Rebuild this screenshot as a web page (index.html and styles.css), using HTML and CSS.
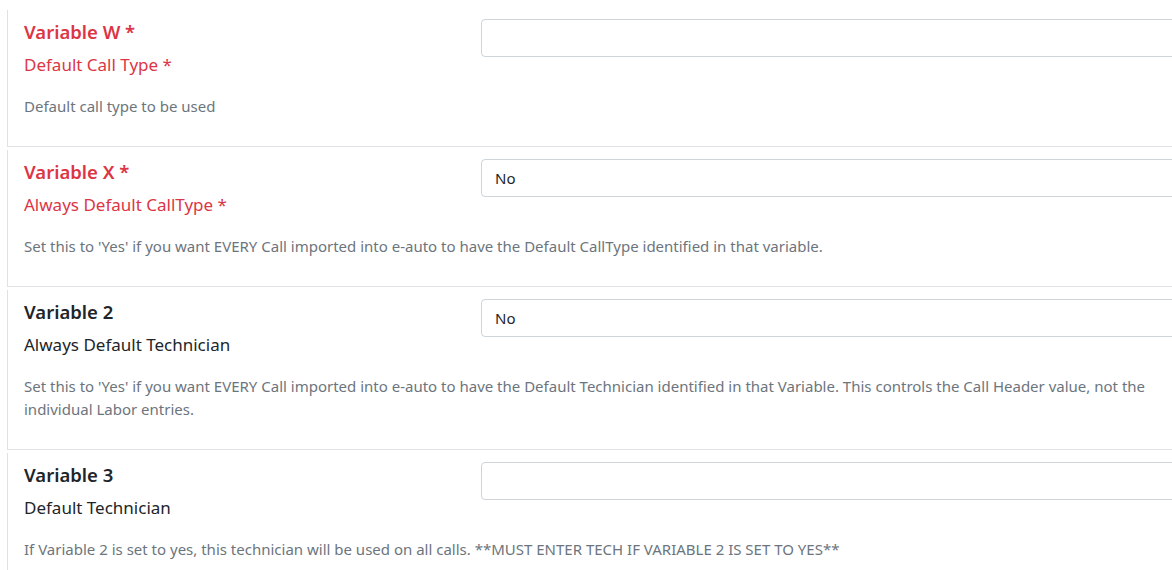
FILE: index.html
```html
<!DOCTYPE html>
<html lang="en">
<head>
<meta charset="utf-8">
<title>Variables</title>
<link rel="stylesheet" href="styles.css">
</head>
<body>
<div class="page">
  <div class="card">
    <div class="row">
      <div class="labels">
        <div class="title required">Variable W *</div>
        <div class="subtitle required">Default Call Type *</div>
      </div>
      <div class="field"><div class="input"></div></div>
    </div>
    <p class="desc">Default call type to be used</p>
  </div>

  <div class="card">
    <div class="row">
      <div class="labels">
        <div class="title required">Variable X *</div>
        <div class="subtitle required">Always Default CallType *</div>
      </div>
      <div class="field"><div class="input">No</div></div>
    </div>
    <p class="desc">Set this to 'Yes' if you want EVERY Call imported into e-auto to have the Default CallType identified in that variable.</p>
  </div>

  <div class="card">
    <div class="row">
      <div class="labels">
        <div class="title">Variable 2</div>
        <div class="subtitle">Always Default Technician</div>
      </div>
      <div class="field"><div class="input">No</div></div>
    </div>
    <p class="desc">Set this to 'Yes' if you want EVERY Call imported into e-auto to have the Default Technician identified in that Variable. This controls the Call Header value, not the individual Labor entries.</p>
  </div>

  <div class="card">
    <div class="row">
      <div class="labels">
        <div class="title">Variable 3</div>
        <div class="subtitle">Default Technician</div>
      </div>
      <div class="field"><div class="input"></div></div>
    </div>
    <p class="desc">If Variable 2 is set to yes, this technician will be used on all calls. **MUST ENTER TECH IF VARIABLE 2 IS SET TO YES**</p>
  </div>
</div>
</body>
</html>
```

FILE: styles.css
```css
html, body {
  margin: 0;
  padding: 0;
  background: #ffffff;
  overflow: hidden;
}

body {
  font-family: "Noto Sans", "Open Sans", sans-serif;
  color: #212529;
}

.page {
  padding: 10px 0 0 7px;
}

.card {
  width: 1200px;
  border-left: 1px solid #dee2e6;
  border-bottom: 1px solid #dee2e6;
  padding: 10px 16px 28.5px 16px;
  margin-bottom: 3px;
  background: #fff;
}

.row {
  display: flex;
  align-items: flex-start;
}

.labels {
  width: 457px;
  flex: none;
}

.title {
  font-size: 18.5px;
  font-weight: 600;
  line-height: 24px;
}

.subtitle {
  font-size: 17px;
  line-height: 24px;
  margin-top: 9px;
}

.required {
  color: #dc3545;
}

.field {
  flex: 1;
  margin-top: -1px;
}

.input {
  height: 36px;
  border: 1px solid #ced4da;
  border-radius: 4px;
  padding: 0 13px;
  font-size: 15px;
  line-height: 36px;
  color: #212529;
}

.desc {
  margin: 17px 0 0 0;
  padding-top: 0.5px;
  font-size: 15px;
  line-height: 23px;
  color: #6c757d;
  max-width: 1150px;
}
```
